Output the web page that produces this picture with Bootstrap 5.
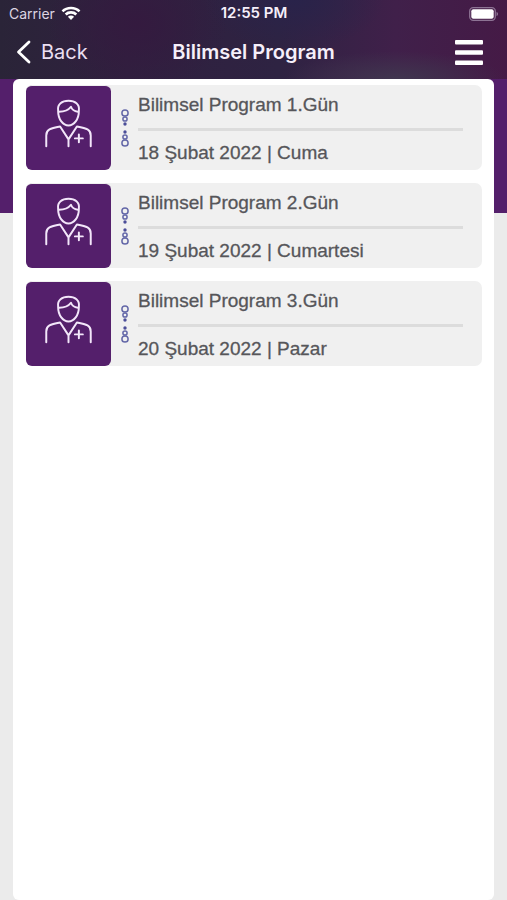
<!DOCTYPE html>
<html lang="tr">
<head>
<meta charset="utf-8">
<meta name="viewport" content="width=device-width, initial-scale=1">
<title>Bilimsel Program</title>
<link href="https://cdn.jsdelivr.net/npm/bootstrap@5.3.0/dist/css/bootstrap.min.css" rel="stylesheet">
<style>
body { font-family: "Liberation Sans", Arial, sans-serif; background: linear-gradient(#541f6b 213px, #ebebeb 213px); }
.app-header {
  font-family: Inter, sans-serif; color: #f6effa; padding-bottom: 2px;
  background:
    radial-gradient(ellipse 110px 28px at 78% 100%, #40364f, transparent),
    radial-gradient(ellipse 90px 50px at 58% 0, #29234a, transparent),
    radial-gradient(ellipse 90px 70px at 27% 30%, #341a3f, transparent),
    linear-gradient(90deg, #2a2438, #30203f 25%, #2e2342 55%, #40204a 78%, #451a46);
}
.status-bar { height: 27px; font-size: 15px; padding: 0 8px 0 9px; }
.status-bar .clock { font-weight: 600; }
.carrier { font-size: 14px; color: #ddd5e2; }
.wifi-gap { gap: 6px; }
.title-bar { height: 50px; padding: 0 24px; }
.back-link { font-size: 20px; gap: 10px; color: #eadff2; margin-left: -8px; }
.page-title { font-size: 20px; font-weight: 600; }
.side { flex: 1 1 0; }
.sheet { margin: 0 13px; padding: 6px 12px 13px 13px; border-radius: 6px; }
.days { gap: 13px; }
.day { height: 85px; background: #f0f0f0; border-radius: 7px; color: #56565a; }
.tile { width: 85px; background: #541f6b; border-radius: 6px; border-top: 1px solid #f0f0f0; }
.dots { width: 27px; }
.day-text { font-size: 19px; line-height: 24px; padding: 8px 19px 5px 0; -webkit-text-stroke: .3px #56565a; }
.day-rule { height: 3px; background: #dcdcdc; }
</style>
<script src="https://cdn.jsdelivr.net/npm/bootstrap@5.3.0/dist/js/bootstrap.bundle.min.js" defer></script>
</head>
<body class="min-vh-100 d-flex flex-column">
<svg class="d-none">
  <symbol id="doctor" viewBox="0 0 85 85"><g fill="none" stroke="#f3e6fa" stroke-width="2" stroke-linecap="round" stroke-linejoin="round"><path d="M32 25C31 18 36 15 42.500 15S54 18 53 25C53 34 48 40 42.500 40S32 34 32 25ZM33 26C38 26 42 25 45 21C46 24 48 25.500 52 26"/><path d="M20 61V50C20 44 24 43 34 41L42.500 54L51 41C61 43 65 44 65 50V61M42.500 54V61M49 53H57M53 49V57"/></g></symbol>
  <symbol id="beads" viewBox="0 0 10 38"><g fill="none" stroke="#6468a8" stroke-width="1.500"><circle cx="5" cy="4" r="3.100"/><circle cx="5" cy="10" r="2.100"/><circle cx="5" cy="28" r="2.100"/><circle cx="5" cy="34" r="3.100"/></g><g fill="#4b4e98"><circle cx="5" cy="15" r="1.700"/><circle cx="5" cy="23" r="1.700"/></g></symbol>
</svg>
<header class="app-header">
  <div class="status-bar d-flex align-items-center">
    <div class="side wifi-gap d-flex align-items-center"><span class="carrier">Carrier</span>
      <svg width="20" height="15" viewBox="0 0 20 15" fill="none" stroke="#fff" stroke-width="2.6" aria-hidden="true"><path d="M1.500 5.300C6 .8 14 .8 18.500 5.300M4.700 8.500C7.500 5.700 12.500 5.700 15.300 8.500"/><path d="M10 14L6.900 10.800C8.500 9.200 11.500 9.200 13.100 10.800Z" fill="#fff" stroke="none"/></svg>
    </div>
    <span class="clock">12:55 PM</span>
    <div class="side d-flex justify-content-end">
      <svg width="30" height="14" viewBox="0 0 30 14" aria-hidden="true"><rect x=".7" y=".7" width="25.600" height="12.600" rx="3.500" fill="none" stroke="#8d7394" stroke-width="1.300"/><rect x="2.300" y="2.300" width="22.400" height="9.400" rx="2" fill="#fff"/><path d="M27.500 5C29.500 5.500 29.500 8.500 27.500 9Z" fill="#8d7394"/></svg>
    </div>
  </div>
  <nav class="title-bar d-flex align-items-center">
    <div class="side d-flex"><a href="#" class="back-link d-flex align-items-center text-decoration-none"><svg width="15" height="24" viewBox="0 0 15 24" fill="none" stroke="#fff" stroke-width="2.800" stroke-linecap="round" stroke-linejoin="round" aria-hidden="true"><path d="M13 2L2.500 12L13 22"/></svg>Back</a></div>
    <h1 class="page-title m-0">Bilimsel Program</h1>
    <div class="side d-flex justify-content-end"><button type="button" class="btn p-0 border-0 d-flex" aria-label="Menu"><svg width="28" height="25" viewBox="0 0 28 25" fill="#fff"><rect width="28" height="4.500" rx="1"/><rect y="10.200" width="28" height="4.500" rx="1"/><rect y="20.400" width="28" height="4.500" rx="1"/></svg></button></div>
  </nav>
</header>
<main class="sheet bg-white flex-grow-1">
  <ul class="days list-unstyled d-flex flex-column m-0">
    <li class="day d-flex">
      <div class="tile d-flex"><svg class="w-100 h-100" aria-hidden="true"><use href="#doctor"/></svg></div>
      <div class="dots d-flex align-items-center justify-content-center"><svg width="10" height="38" aria-hidden="true"><use href="#beads"/></svg></div>
      <div class="day-text flex-grow-1 d-flex flex-column justify-content-between"><div>Bilimsel Program 1.Gün</div><div class="day-rule"></div><div>18 Şubat 2022 | Cuma</div></div>
    </li>
    <li class="day d-flex">
      <div class="tile d-flex"><svg class="w-100 h-100" aria-hidden="true"><use href="#doctor"/></svg></div>
      <div class="dots d-flex align-items-center justify-content-center"><svg width="10" height="38" aria-hidden="true"><use href="#beads"/></svg></div>
      <div class="day-text flex-grow-1 d-flex flex-column justify-content-between"><div>Bilimsel Program 2.Gün</div><div class="day-rule"></div><div>19 Şubat 2022 | Cumartesi</div></div>
    </li>
    <li class="day d-flex">
      <div class="tile d-flex"><svg class="w-100 h-100" aria-hidden="true"><use href="#doctor"/></svg></div>
      <div class="dots d-flex align-items-center justify-content-center"><svg width="10" height="38" aria-hidden="true"><use href="#beads"/></svg></div>
      <div class="day-text flex-grow-1 d-flex flex-column justify-content-between"><div>Bilimsel Program 3.Gün</div><div class="day-rule"></div><div>20 Şubat 2022 | Pazar</div></div>
    </li>
  </ul>
</main>
</body>
</html>
